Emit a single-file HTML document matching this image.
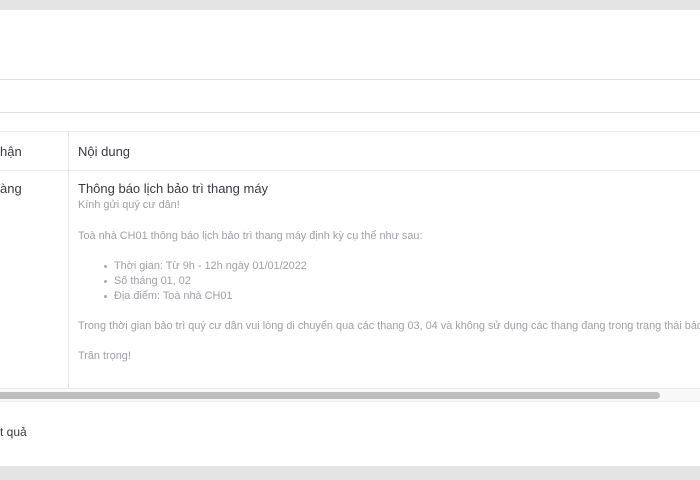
<!DOCTYPE html>
<html><head><meta charset="utf-8"><style>
*{margin:0;padding:0;box-sizing:border-box}
body{width:700px;height:480px;background:#e4e4e4;font-family:"Liberation Sans",sans-serif;position:relative;overflow:hidden}
.card{position:absolute;left:0;top:10px;width:700px;height:456px;background:#fff}
.hl{position:absolute;left:0;width:700px;height:1px;background:#dcdce2}
.t{position:absolute;white-space:nowrap}
.h{font-size:13px;color:#3a3a44}
.s{font-size:10.9px;color:#a0a0a8}
.dot{position:absolute;width:3px;height:3px;border-radius:50%;background:#aaa}
</style></head><body>
<div class="card"></div>
<div class="hl" style="top:79px"></div>
<div class="hl" style="top:112px"></div>
<div class="hl" style="top:131px;background:#ececf0"></div>
<div class="hl" style="top:170px;background:#ececf0"></div>
<div class="hl" style="top:388px;background:#ececf0"></div>
<div style="position:absolute;left:68px;top:131px;width:1px;height:257px;background:#e6e6ea"></div>
<div style="position:absolute;left:0;top:389px;width:700px;height:13px;background:#f8f8f8;border-bottom:1px solid #eee"></div>
<div style="position:absolute;left:-6px;top:392px;width:666px;height:7px;border-radius:4px;background:#bdbdbd"></div>
<div class="t h" style="left:0;top:144px">hận</div>
<div class="t h" style="left:78px;top:144px">Nội dung</div>
<div class="t h" style="left:0;top:181px">àng</div>
<div class="t h" style="left:78px;top:181px">Thông báo lịch bảo trì thang máy</div>
<div class="t s" style="left:78px;top:199px">Kính gửi quý cư dân!</div>
<div class="t s" style="left:78px;top:230px">Toà nhà CH01 thông báo lịch bảo trì thang máy định kỳ cụ thể như sau:</div>
<div class="dot" style="left:104px;top:265px"></div>
<div class="dot" style="left:104px;top:280px"></div>
<div class="dot" style="left:104px;top:295px"></div>
<div class="t s" style="left:114px;top:260px">Thời gian: Từ 9h - 12h ngày 01/01/2022</div>
<div class="t s" style="left:114px;top:275px">Số tháng 01, 02</div>
<div class="t s" style="left:114px;top:290px">Địa điểm: Toà nhà CH01</div>
<div class="t s" style="left:78px;top:320px">Trong thời gian bảo trì quý cư dân vui lòng di chuyển qua các thang 03, 04 và không sử dụng các thang đang trong trạng thái bảo trì</div>
<div class="t s" style="left:78px;top:350px">Trân trọng!</div>
<div class="t" style="left:0;top:425px;font-size:12px;color:#3a3a44">t quả</div>
</body></html>
